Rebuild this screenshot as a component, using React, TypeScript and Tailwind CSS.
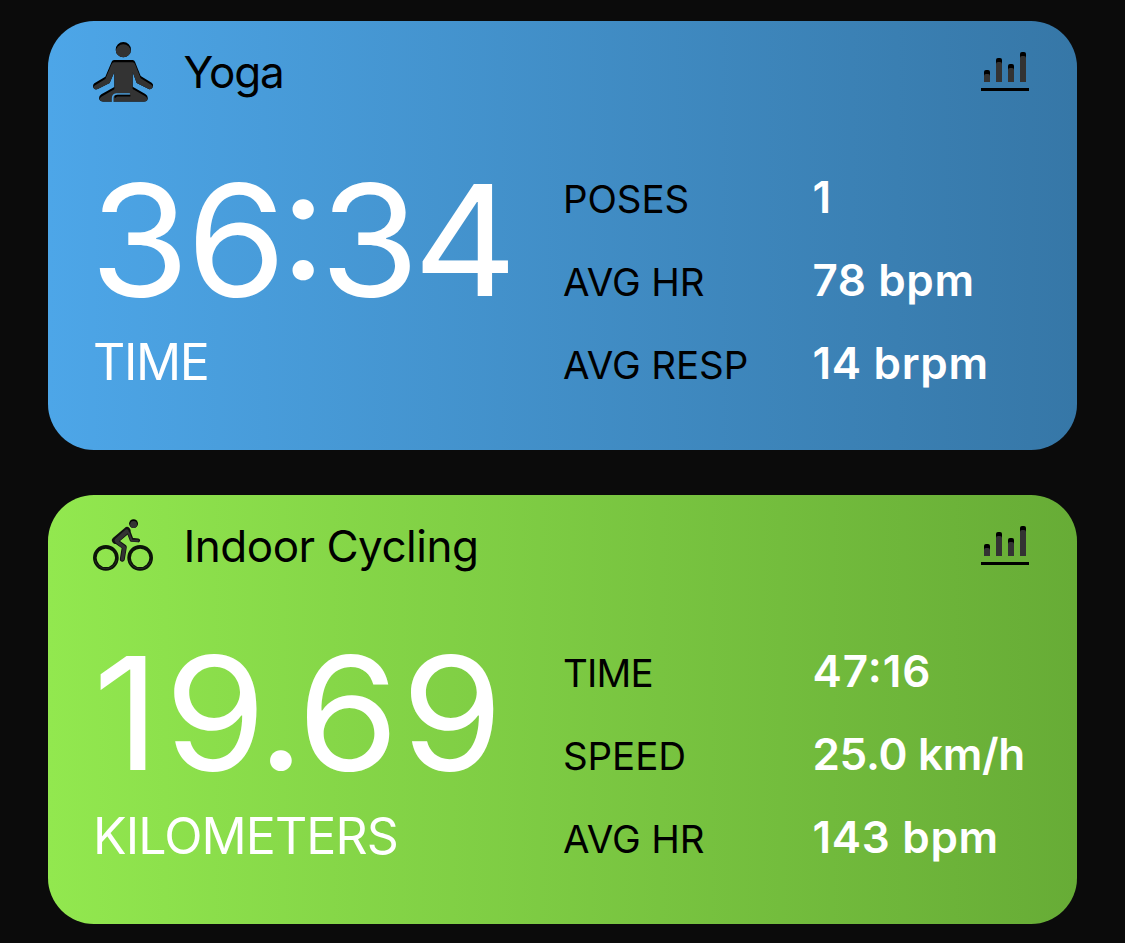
import type { ReactNode } from "react";

function YogaIcon() {
  const body =
    "M90 84H146Q151 84 153 89L170 132L203 152Q210 158 206 166Q201 174 194 171L158 153L146 120V164L184 186Q193 192 191 201Q189 209 180 209H57Q46 208 45 199Q45 192 52 187L91 165V120L77 153L41 171Q33 175 28 167Q25 159 31 154L64 134L83 89Q85 84 90 84Z";
  return (
    <svg viewBox="27 30 180 180" className="h-[60px] w-[60px]">
      <defs>
        <clipPath id="yoga-clip">
          <path d={body} />
          <circle cx="118" cy="53" r="23" />
        </clipPath>
      </defs>
      <g clipPath="url(#yoga-clip)">
        <rect x="20" y="20" width="200" height="200" fill="#000" />
        <g fill="#333" transform="translate(0 7)">
          <path d={body} />
          <circle cx="118" cy="53" r="23" />
        </g>
      </g>
      <path d="M86 211V199Q86 187 97 186H136" fill="none" stroke="#4ba3e4" strokeWidth="5" strokeLinecap="round" />
      <path d="M94 195Q95 191 101 191H137" fill="none" stroke="#000" strokeWidth="5" strokeLinecap="round" />
    </svg>
  );
}

function CyclingIcon() {
  return (
    <svg viewBox="26 32 182 180" className="h-[60px] w-[60px]" fill="none">
      <g stroke="#0c1408" strokeWidth="11">
        <circle cx="65" cy="158" r="33.5" />
        <circle cx="169" cy="158" r="33.5" />
      </g>
      <g stroke="#333" strokeWidth="3" opacity="0.7">
        <path d="M32 165A34 34 0 0 0 98 165" />
        <path d="M136 165A34 34 0 0 0 202 165" />
      </g>
      <g strokeLinecap="round" strokeLinejoin="round" stroke="#111">
        <path d="M129 75L94 105" strokeWidth="21" />
        <path d="M95 107L121 125L115 162" strokeWidth="15" />
        <path d="M132 74L143 103L163 105" strokeWidth="12" />
      </g>
      <g strokeLinecap="round" strokeLinejoin="round" stroke="#333">
        <path d="M128 78L98 105" strokeWidth="13" />
        <path d="M99 109L121 127L115 162" strokeWidth="10" />
        <path d="M134 82L143 105L162 106" strokeWidth="6" />
      </g>
      <circle cx="149" cy="54" r="13.5" fill="#000" />
      <circle cx="149" cy="57" r="10.5" fill="#333" />
    </svg>
  );
}

const bars = [
  { x: 3, top: 18 },
  { x: 15, top: 6 },
  { x: 27, top: 12 },
  { x: 39, top: 0 },
];

function ChartIcon() {
  return (
    <svg viewBox="0 0 48 39" className="mb-px h-[39px] w-[48px]">
      {bars.map(({ x, top }) => (
        <g key={x}>
          <path d={`M${x} 30V${top + 2}q0 -2 2 -2h2q2 0 2 2V30z`} fill="#000" />
          <path d={`M${x} 30V${top + 6}q0 -2 2 -2h2q2 0 2 2V30z`} fill="#333" />
        </g>
      ))}
      <rect y="36" width="48" height="3" fill="#000" />
    </svg>
  );
}

interface Stat {
  label: string;
  value: string;
  labelClass: string;
  valueClass: string;
}

interface CardProps {
  icon: ReactNode;
  title: string;
  titleClass: string;
  gradient: string;
  main: ReactNode;
  mainClass: string;
  unit: string;
  unitClass: string;
  stats: Stat[];
}

function Card({ icon, title, titleClass, gradient, main, mainClass, unit, unitClass, stats }: CardProps) {
  return (
    <section className={`h-[429px] w-[1029px] rounded-[46px] ${gradient}`}>
      <header className="flex h-[102px] items-center pr-12 pl-[45px]">
        {icon}
        <h2 className={`ml-[30.5px] flex-1 text-[44px] text-black ${titleClass}`}>{title}</h2>
        <ChartIcon />
      </header>
      <div className="mt-8 flex pl-[45px]">
        <div className="w-[470px] whitespace-nowrap text-white">
          <div className={`origin-left scale-x-[1.045] ${mainClass}`}>{main}</div>
          <div className={`text-[50px] leading-[72px] ${unitClass}`}>{unit}</div>
        </div>
        <dl className="pt-px">
          {stats.map((s) => (
            <div key={s.label} className="flex h-[83px] items-baseline leading-[83px] whitespace-nowrap">
              <dt className={`w-[249.5px] text-[38.5px] text-black ${s.labelClass}`}>{s.label}</dt>
              <dd className={`text-[44px] font-semibold text-white ${s.valueClass}`}>{s.value}</dd>
            </div>
          ))}
        </dl>
      </div>
    </section>
  );
}

export default function App() {
  return (
    <main className="flex h-[943px] w-[1125px] flex-col gap-[45px] overflow-hidden bg-[#0b0b0b] pt-[21px] pl-12 font-['Inter',sans-serif] [font-feature-settings:'calt'_1]">
      <Card
        icon={<YogaIcon />}
        title="Yoga"
        titleClass="tracking-[-1.1px]"
        gradient="bg-linear-to-r from-[#4da6e8] to-[#3677a7]"
        main={
          <>
            <span className="tracking-[-2.8px]">3</span>6:34
          </>
        }
        mainClass="-ml-[3px] text-[154px] leading-[170px] tracking-[-6px]"
        unit="TIME"
        unitClass="pt-px tracking-[-1.4px]"
        stats={[
          { label: "POSES", value: "1", labelClass: "tracking-[-0.1px]", valueClass: "" },
          { label: "AVG HR", value: "78 bpm", labelClass: "tracking-[-0.1px]", valueClass: "tracking-[0.6px]" },
          { label: "AVG RESP", value: "14 brpm", labelClass: "tracking-[-0.1px]", valueClass: "tracking-[0.7px]" },
        ]}
      />
      <Card
        icon={<CyclingIcon />}
        title="Indoor Cycling"
        titleClass="tracking-[-0.5px]"
        gradient="bg-linear-to-r from-[#92e84f] to-[#67ac36]"
        main={
          <>
            <span className="tracking-[4.5px]">1</span>
            <span className="tracking-[-8.5px]">9</span>
            <span className="tracking-[-7px]">.</span>69
          </>
        }
        mainClass="text-[157px] leading-[168px] tracking-[2.2px]"
        unit="KILOMETERS"
        unitClass="pt-[3px] tracking-[-0.9px]"
        stats={[
          { label: "TIME", value: "47:16", labelClass: "tracking-[-0.8px]", valueClass: "tracking-[1px]" },
          { label: "SPEED", value: "25.0 km/h", labelClass: "tracking-[-0.1px]", valueClass: "tracking-[-0.3px]" },
          { label: "AVG HR", value: "143 bpm", labelClass: "tracking-[-0.1px]", valueClass: "tracking-[0.7px]" },
        ]}
      />
    </main>
  );
}
